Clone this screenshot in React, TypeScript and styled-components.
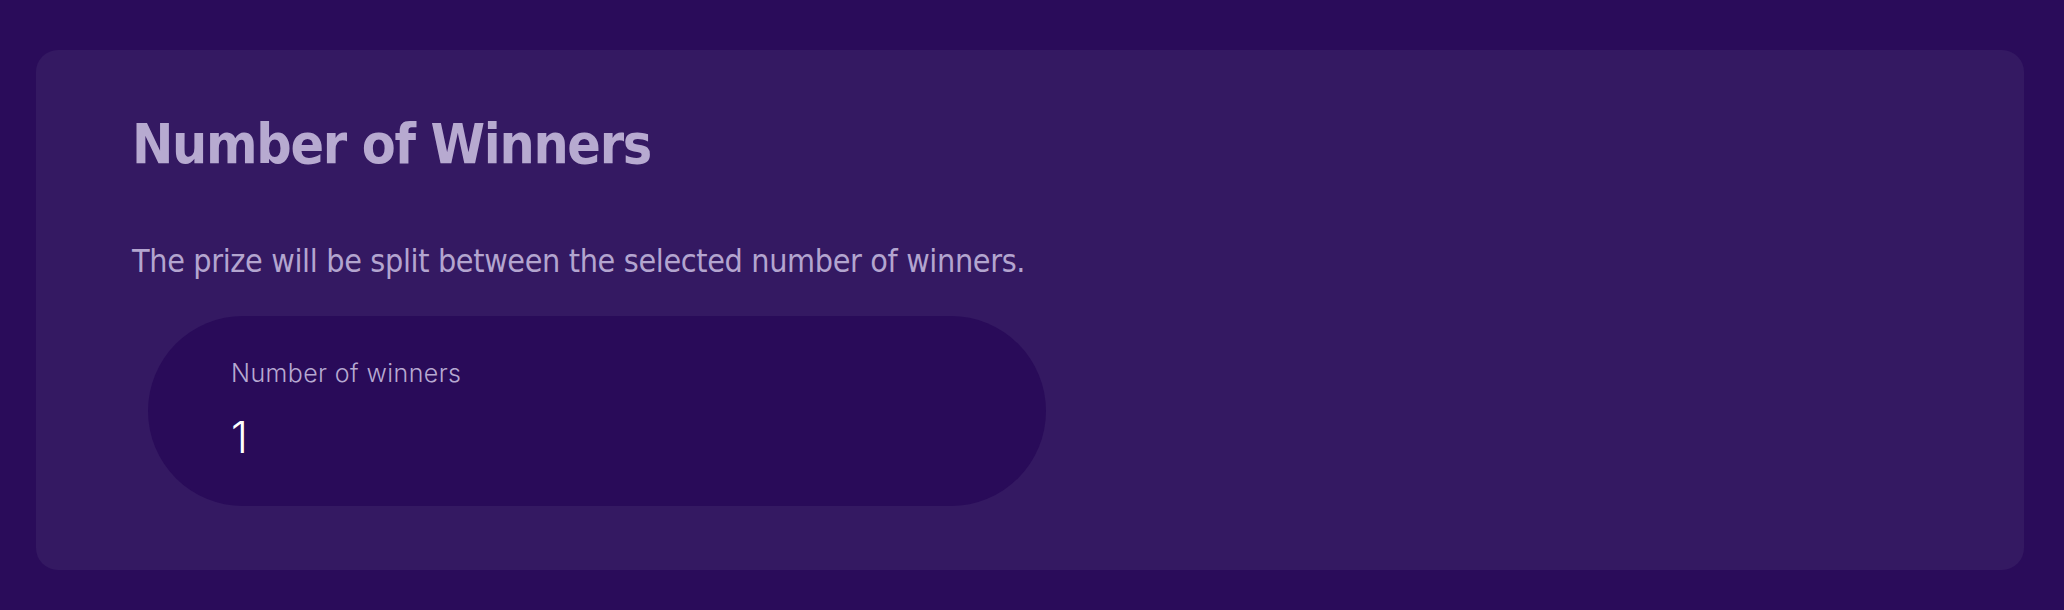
import styled, { createGlobalStyle } from 'styled-components';

const GlobalStyle = createGlobalStyle`
  html, body {
    margin: 0;
    padding: 0;
    background: #2a0c5a;
  }
`;

const Page = styled.div`
  box-sizing: border-box;
  width: 2064px;
  height: 610px;
  padding: 50px 40px 40px 36px;
  background: #2a0c5a;
`;

const Card = styled.section`
  display: flex;
  flex-direction: column;
  align-items: flex-start;
  box-sizing: border-box;
  height: 520px;
  padding: 62px 40px 64px 96px;
  border-radius: 22px;
  background: #341962;
`;

const Title = styled.h2`
  margin: 0;
  font-family: "DejaVu Sans Condensed", "DejaVu Sans", sans-serif;
  font-weight: 700;
  font-size: 55px;
  line-height: 64px;
  letter-spacing: -1.3px;
  color: #b7aad0;
`;

const Description = styled.p`
  margin: 65px 0 0;
  font-family: "DejaVu Sans Condensed", "DejaVu Sans", sans-serif;
  font-weight: 400;
  font-size: 32px;
  line-height: 40px;
  letter-spacing: -0.35px;
  color: #b3a5cf;
`;

const Field = styled.div`
  display: flex;
  flex-direction: column;
  gap: 23px;
  box-sizing: border-box;
  width: 898px;
  height: 190px;
  margin: 35px 0 0 16px;
  padding: 42px 83px 43px;
  border-radius: 95px;
  background: #290b59;
`;

const Label = styled.label`
  font-family: Inter, "Noto Sans", sans-serif;
  font-weight: 300;
  font-size: 25px;
  line-height: 30px;
  letter-spacing: 0.4px;
  color: #b6a9d1;
`;

const Value = styled.div`
  font-family: Inter, "Noto Sans", sans-serif;
  font-weight: 300;
  font-size: 43px;
  line-height: 52px;
  color: #ffffff;
`;

export default function App() {
  return (
    <>
      <GlobalStyle />
      <Page>
        <Card>
          <Title>Number of Winners</Title>
          <Description>The prize will be split between the selected number of winners.</Description>
          <Field>
            <Label>Number of winners</Label>
            <Value>1</Value>
          </Field>
        </Card>
      </Page>
    </>
  );
}
